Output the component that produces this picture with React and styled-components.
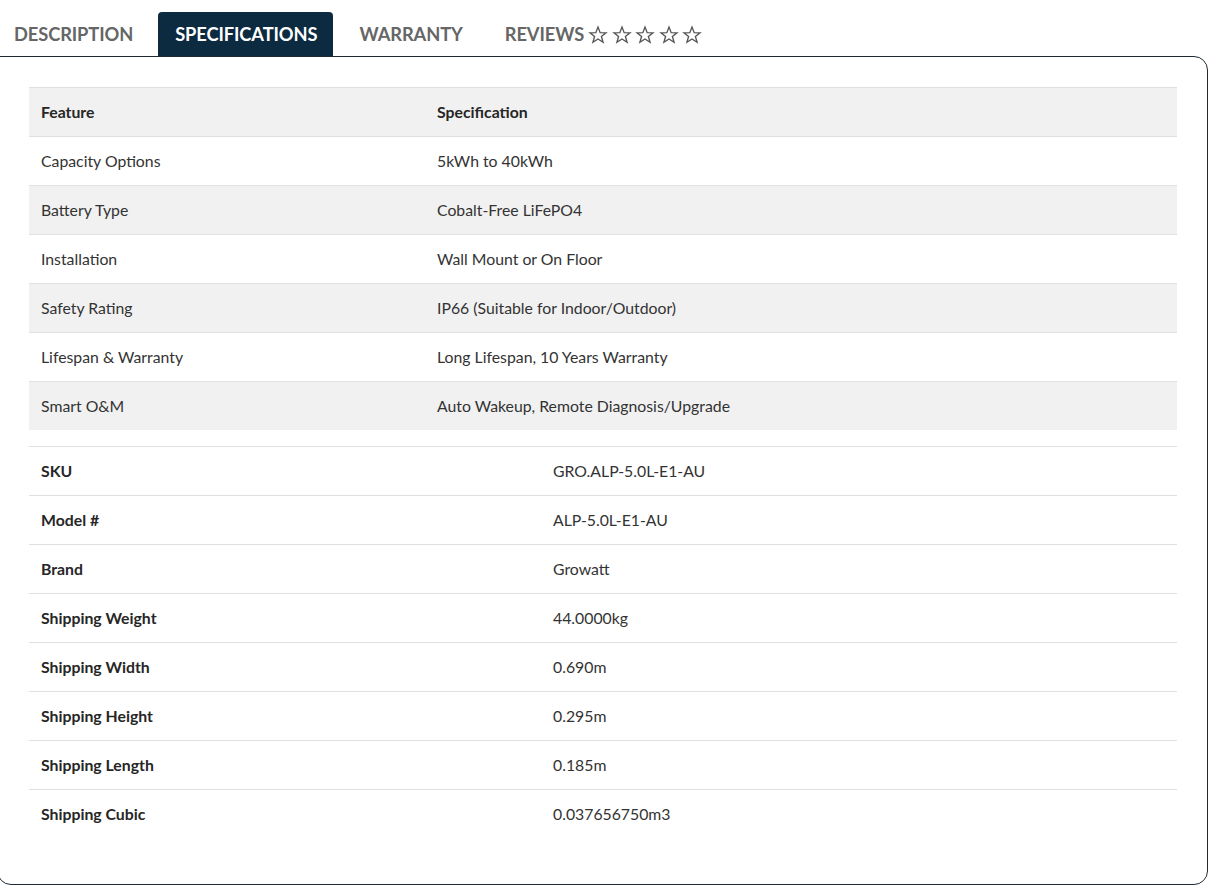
import React from "react";
import styled, { createGlobalStyle } from "styled-components";

const Global = createGlobalStyle`
  html, body { margin: 0; padding: 0; background: #fff; }
  body { font-family: Lato, "Open Sans", Arial, sans-serif; color: #333; }
  * { box-sizing: border-box; }
`;

const Wrap = styled.div`
  width: 1211px;
  margin-left: -3px;
  padding-top: 12px;
`;

const TabBar = styled.div`
  display: flex;
  align-items: flex-end;
  gap: 9px;
  height: 44px;
`;

const Tab = styled.div`
  display: flex;
  align-items: center;
  gap: 4px;
  height: 44px;
  padding: 0 16px 0 17px;
  font-family: Lato, sans-serif;
  font-weight: 700;
  font-size: 18.3px;
  letter-spacing: -0.1px;
  color: ${(p) => (p.$active ? "#fff" : "#666")};
  background: ${(p) => (p.$active ? "#0c2a40" : "transparent")};
  border-radius: 4px 4px 0 0;
`;

const Stars = styled.span`
  display: flex;
  gap: 3.5px;
  margin-top: 1px;
`;

const Panel = styled.div`
  border: 1px solid #1e2b33;
  border-radius: 0 14px 14px 14px;
  height: 829px;
  padding: 30px 30px 0 31px;
`;

const Table = styled.div`
  display: grid;
  grid-template-columns: ${(p) => p.$cols};
  margin-bottom: ${(p) => p.$mb || 0}px;
`;

const Cell = styled.div`
  height: 49px;
  display: flex;
  align-items: center;
  padding: 0 12px 2px;
  font-size: 15.8px;
  font-weight: ${(p) => (p.$bold ? 700 : 400)};
  color: ${(p) => (p.$bold ? "#262626" : "#333")};
  background: ${(p) => (p.$grey ? "#f1f1f1" : "#fff")};
  border-top: 1px solid #e0e0e0;
`;

const Star = () => (
  <svg width="20" height="20" viewBox="0 0 24 24">
    <polygon
      points="12,2.5 14.6,9.2 21.6,9.4 16.1,13.8 18.1,20.8 12,16.8 5.9,20.8 7.9,13.8 2.4,9.4 9.4,9.2"
      fill="none"
      stroke="#555"
      strokeWidth="1.6"
      strokeLinejoin="miter"
    />
  </svg>
);

const specs = [
  ["Capacity Options", "5kWh to 40kWh"],
  ["Battery Type", "Cobalt-Free LiFePO4"],
  ["Installation", "Wall Mount or On Floor"],
  ["Safety Rating", "IP66 (Suitable for Indoor/Outdoor)"],
  ["Lifespan & Warranty", "Long Lifespan, 10 Years Warranty"],
  ["Smart O&M", "Auto Wakeup, Remote Diagnosis/Upgrade"],
];

const info = [
  ["SKU", "GRO.ALP-5.0L-E1-AU"],
  ["Model #", "ALP-5.0L-E1-AU"],
  ["Brand", "Growatt"],
  ["Shipping Weight", "44.0000kg"],
  ["Shipping Width", "0.690m"],
  ["Shipping Height", "0.295m"],
  ["Shipping Length", "0.185m"],
  ["Shipping Cubic", "0.037656750m3"],
];

export default function App() {
  return (
    <>
      <Global />
      <Wrap>
        <TabBar>
          <Tab>DESCRIPTION</Tab>
          <Tab $active>SPECIFICATIONS</Tab>
          <Tab>WARRANTY</Tab>
          <Tab>
            REVIEWS
            <Stars>
              {[0, 1, 2, 3, 4].map((i) => (
                <Star key={i} />
              ))}
            </Stars>
          </Tab>
        </TabBar>
        <Panel>
          <Table $cols="396px 1fr" $mb={16}>
            <Cell $bold $grey>Feature</Cell>
            <Cell $bold $grey>Specification</Cell>
            {specs.map(([a, b], i) => (
              <React.Fragment key={a}>
                <Cell $grey={i % 2 === 1}>{a}</Cell>
                <Cell $grey={i % 2 === 1}>{b}</Cell>
              </React.Fragment>
            ))}
          </Table>
          <Table $cols="512px 1fr">
            {info.map(([a, b]) => (
              <React.Fragment key={a}>
                <Cell $bold>{a}</Cell>
                <Cell>{b}</Cell>
              </React.Fragment>
            ))}
          </Table>
        </Panel>
      </Wrap>
    </>
  );
}
